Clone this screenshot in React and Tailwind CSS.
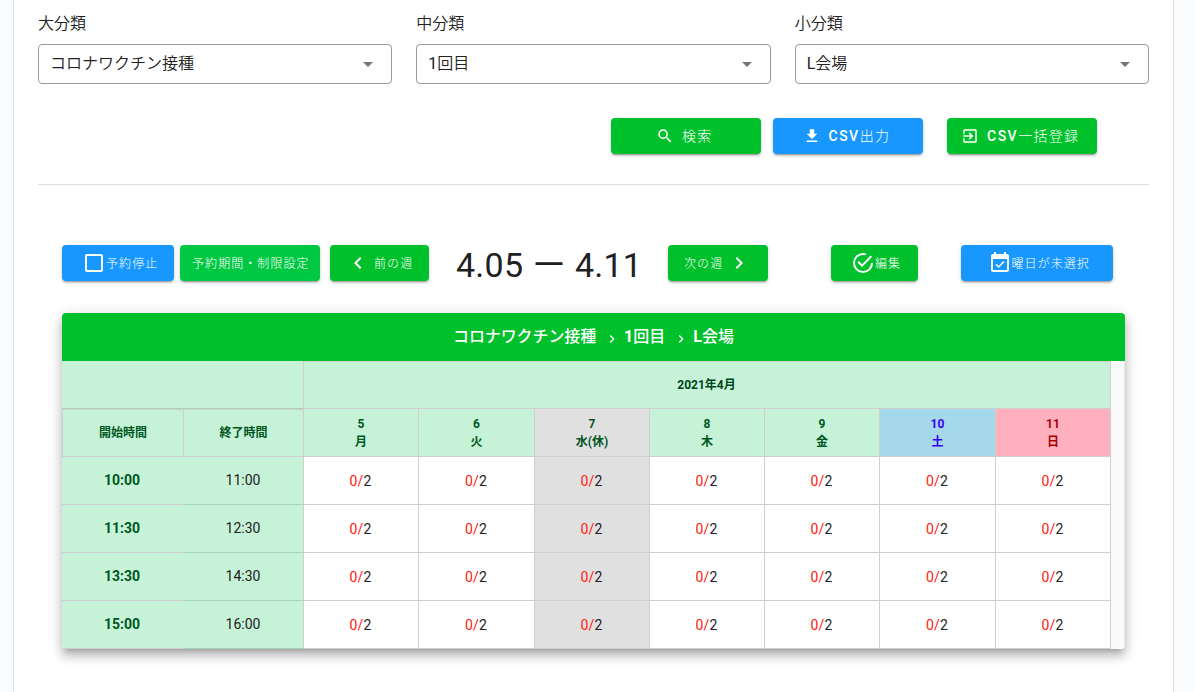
const ICONS = {
  magnify:
    "M9.5,3A6.5,6.5 0 0,1 16,9.5C16,11.11 15.41,12.59 14.44,13.73L14.71,14H15.5L20.5,19L19,20.5L14,15.5V14.71L13.73,14.44C12.59,15.41 11.11,16 9.5,16A6.5,6.5 0 0,1 3,9.5A6.5,6.5 0 0,1 9.5,3M9.5,5C7,5 5,7 5,9.5C5,12 7,14 9.5,14C12,14 14,12 14,9.5C14,7 12,5 9.5,5Z",
  download: "M5,20H19V18H5M19,9H15V3H9V9H5L12,16L19,9Z",
  enter:
    "M19,3H5C3.89,3 3,3.89 3,5V9H5V5H19V19H5V15H3V19A2,2 0 0,0 5,21H19A2,2 0 0,0 21,19V5C21,3.89 20.1,3 19,3M10.08,15.58L11.5,17L16.5,12L11.5,7L10.08,8.41L12.67,11H3V13H12.67L10.08,15.58Z",
  checkbox:
    "M19,3H5C3.89,3 3,3.89 3,5V19A2,2 0 0,0 5,21H19A2,2 0 0,0 21,19V5C21,3.89 20.1,3 19,3M19,5V19H5V5H19Z",
  left: "M15.41,16.58L10.83,12L15.41,7.41L14,6L8,12L14,18L15.41,16.58Z",
  right: "M8.59,16.58L13.17,12L8.59,7.41L10,6L16,12L10,18L8.59,16.58Z",
  check:
    "M20,12A8,8 0 0,1 12,20A8,8 0 0,1 4,12A8,8 0 0,1 12,4C12.76,4 13.5,4.11 14.2,4.31L15.77,2.74C14.61,2.26 13.34,2 12,2A10,10 0 0,0 2,12A10,10 0 0,0 12,22A10,10 0 0,0 22,12M7.91,10.08L6.5,11.5L11,16L21,6L19.59,4.58L11,13.17L7.91,10.08Z",
  calendar:
    "M19,19H5V8H19M19,3H18V1H16V3H8V1H6V3H5C3.89,3 3,3.9 3,5V19A2,2 0 0,0 5,21H19A2,2 0 0,0 21,19V5A2,2 0 0,0 19,3M16.53,11.06L15.47,10L10.59,14.88L8.47,12.76L7.41,13.82L10.59,17L16.53,11.06Z",
  caret: "M7,10L12,15L17,10H7Z",
};

function Icon({ name, className }) {
  return (
    <svg viewBox="0 0 24 24" fill="currentColor" className={`shrink-0 ${className}`}>
      <path d={ICONS[name]} />
    </svg>
  );
}

const SHADOW =
  "shadow-[0_3px_1px_-2px_rgba(0,0,0,0.2),0_2px_2px_0_rgba(0,0,0,0.14),0_1px_5px_0_rgba(0,0,0,0.12)]";

function Button({ className, children }) {
  return (
    <button
      className={`flex h-9 shrink-0 items-center rounded whitespace-nowrap text-white ${SHADOW} ${className}`}
    >
      {children}
    </button>
  );
}

function Select({ label, latin, value }) {
  return (
    <div>
      <div className="h-6 text-base leading-6 font-[350]">{label}</div>
      <div className="mt-2 flex h-10 items-center justify-between rounded border border-[#9a9a9a] pr-[11px] pl-[11px]">
        <span className="text-base leading-6 font-[350]">
          <span className="font-normal">{latin}</span>
          {value}
        </span>
        <Icon name="caret" className="size-6 text-[#757575]" />
      </div>
    </div>
  );
}

const COLS = "grid grid-cols-[122px_120px_115px_116px_115px_115px_115px_116px_115px]";

const DAYS = [
  { n: "5", d: "月", c: "bg-[#c6f3d8] text-[#00561f]" },
  { n: "6", d: "火", c: "bg-[#c6f3d8] text-[#00561f]" },
  { n: "7", d: "水(休)", c: "bg-[#e0e0e0] text-[#00561f]" },
  { n: "8", d: "木", c: "bg-[#c6f3d8] text-[#00561f]" },
  { n: "9", d: "金", c: "bg-[#c6f3d8] text-[#00561f]" },
  { n: "10", d: "土", c: "bg-[#a5d8e8] text-[#3a00f5]" },
  { n: "11", d: "日", c: "bg-[#ffb0bf] text-[#a80000]" },
];

const TIMES = [
  ["10:00", "11:00"],
  ["11:30", "12:30"],
  ["13:30", "14:30"],
  ["15:00", "16:00"],
];

function Schedule() {
  return (
    <div className="mt-8 ml-6 w-[1063px] overflow-hidden rounded shadow-[0_5px_5px_-3px_rgba(0,0,0,0.2),0_8px_10px_1px_rgba(0,0,0,0.14),0_3px_14px_2px_rgba(0,0,0,0.12)]">
      <div className="flex h-12 items-center bg-[#00c02b] pb-px pl-[391px] text-base font-medium text-white">
        <span className="tracking-[-0.1px]">コロナワクチン接種</span>
        <Icon name="right" className="mt-1 ml-2 size-4" />
        <span className="ml-1">
          <span className="font-bold">1</span>回目
        </span>
        <Icon name="right" className="mt-1 ml-2 size-4" />
        <span className="ml-1">
          <span className="font-bold">L</span>会場
        </span>
      </div>
      <div className="flex bg-[#fafafa]">
        <div className="w-[1049px]">
          <div className="flex h-12 bg-[#c6f3d8] text-xs font-bold text-[#00451a]">
            <div className="w-[242px] border-r border-b border-r-[#cfcfcf] border-b-[#a9d4b9]" />
            <div className="flex flex-1 items-center justify-center border-t border-r border-b border-[#cfcfcf] pr-px">
              2021年4月
            </div>
          </div>
          <div className={`${COLS} h-12 text-xs leading-[18px] font-bold`}>
            <div className="flex items-center justify-center border border-[#cfcfcf] bg-[#c6f3d8] text-[#00561f]">
              開始時間
            </div>
            <div className="flex items-center justify-center border-t border-r border-b border-[#cfcfcf] bg-[#c6f3d8] text-[#00561f]">
              終了時間
            </div>
            {DAYS.map((day) => (
              <div
                key={day.n}
                className={`flex flex-col items-center justify-center border-r border-b border-[#cfcfcf] ${day.c}`}
              >
                <span>{day.n}</span>
                <span>{day.d}</span>
              </div>
            ))}
          </div>
          {TIMES.map(([start, end]) => (
            <div key={start} className={`${COLS} h-12 text-sm`}>
              <div className="flex items-center justify-center border-b border-[#cfcfcf] bg-[#c6f3d8] pr-0.5 pb-px font-bold text-[#00561f]">
                {start}
              </div>
              <div className="flex items-center justify-center border-r border-b border-r-[#cfcfcf] border-b-[#a9d4b9] bg-[#c6f3d8] pr-px pb-px">
                {end}
              </div>
              {DAYS.map((day) => (
                <div
                  key={day.n}
                  className={`flex items-center justify-center border-r border-b border-[#cfcfcf] pt-px pr-px tracking-[0.15px] ${
                    day.n === "7" ? "bg-[#e0e0e0]" : "bg-white"
                  }`}
                >
                  <span className="text-[#ff2010]">0/</span>2
                </div>
              ))}
            </div>
          ))}
        </div>
        <div className="flex-1 border-r border-[#e8e8e8]" />
      </div>
    </div>
  );
}

export default function App() {
  return (
    <div className="h-[692px] overflow-hidden bg-[#fafbfd] pr-5 pl-[13px] font-[Roboto,'Noto_Sans_CJK_JP',sans-serif] text-[#212121]">
      <div className="h-full border-x border-[#dcdfe3] bg-white px-6 pt-3">
        <div className="grid grid-cols-3 gap-6">
          <Select label="大分類" value="コロナワクチン接種" />
          <Select label="中分類" latin="1" value="回目" />
          <Select label="小分類" latin="L" value="会場" />
        </div>
        <div className="mt-[34px] flex pl-[573px] text-sm font-medium tracking-[1.25px]">
          <Button className="w-[150px] bg-[#00c02b] pl-[45px]">
            <Icon name="magnify" className="mr-2 size-[18px]" />
            <span className="font-light">検索</span>
          </Button>
          <Button className="ml-3 w-[150px] bg-[#1898ff] pl-[29.5px]">
            <Icon name="download" className="mr-2 size-[18px]" />
            <span className="tracking-[1.5px]">CSV</span>
            <span className="font-light">出力</span>
          </Button>
          <Button className="ml-6 w-[150px] bg-[#00c02b] pl-[14px]">
            <Icon name="enter" className="mr-2 size-[18px]" />
            <span className="tracking-[1.5px]">CSV</span>
            <span className="font-light">一括登録</span>
          </Button>
        </div>
        <div className="mt-[30px] h-px bg-[#dedede]" />
        <div className="mt-[60px] flex h-9 items-center pl-6 text-xs font-light tracking-[1.07px]">
          <Button className="w-28 bg-[#1898ff] pl-5">
            <Icon name="checkbox" className="size-6" />
            <span className="pt-px">予約停止</span>
          </Button>
          <Button className="ml-1.5 w-[140px] bg-[#00c842] pl-3">
            <span className="pt-px">予約期間・制限設定</span>
          </Button>
          <Button className="ml-2.5 w-[99px] bg-[#00c02b] pl-4">
            <Icon name="left" className="mr-1 size-6" />
            <span className="pt-px">前の週</span>
          </Button>
          <div className="ml-[27px] w-[212px] pt-1 text-[34px] leading-10 font-normal tracking-[0.25px] whitespace-nowrap">
            4.05 <span className="font-[350]">ー</span> 4.11
          </div>
          <Button className="w-[100px] bg-[#00c02b] pl-4">
            <span className="pt-px">次の週</span>
            <Icon name="right" className="ml-1 size-6" />
          </Button>
          <Button className="ml-[63px] w-[87px] bg-[#00c02b] pl-5">
            <Icon name="check" className="size-6" />
            <span className="pt-px">編集</span>
          </Button>
          <Button className="ml-[43px] w-[152px] bg-[#1898ff] pl-[26.5px]">
            <Icon name="calendar" className="size-6" />
            <span className="pt-px">曜日が未選択</span>
          </Button>
        </div>
        <Schedule />
      </div>
    </div>
  );
}
